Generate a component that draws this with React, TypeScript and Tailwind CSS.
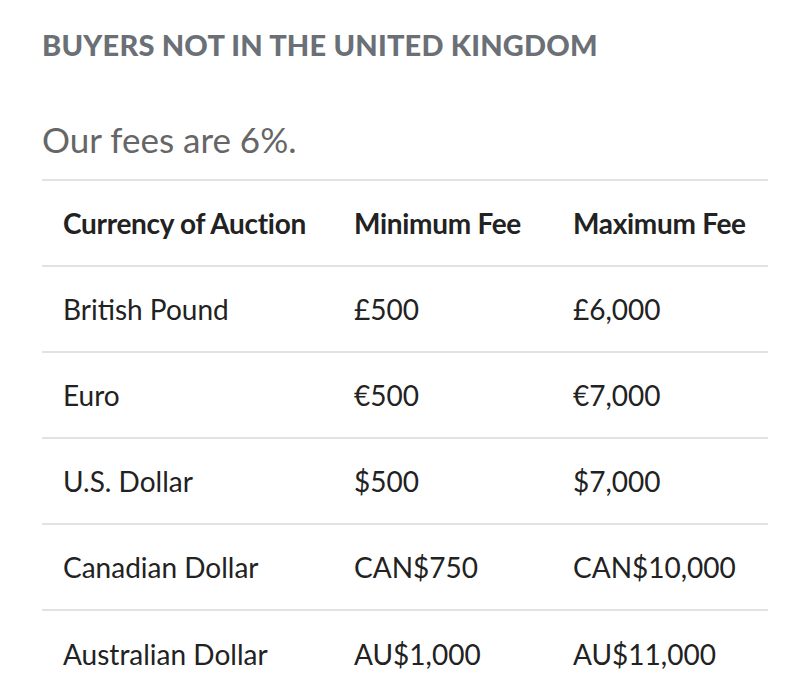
const rows = [
  ["British Pound", "£500", "£6,000"],
  ["Euro", "€500", "€7,000"],
  ["U.S. Dollar", "$500", "$7,000"],
  ["Canadian Dollar", "CAN$750", "CAN$10,000"],
  ["Australian Dollar", "AU$1,000", "AU$11,000"],
];

export default function App() {
  return (
    <div className="min-h-screen bg-white px-[42px] pt-[27px] font-['Lato','Liberation_Sans',sans-serif]">
      <h2 className="font-['Futura','Lato','Liberation_Sans',sans-serif] text-[29px] font-black uppercase leading-[36px] tracking-[0.2px] text-[#6b7076]">
        Buyers not in the United Kingdom
      </h2>
      <p className="mt-[54px] text-[35px] leading-[44px] text-[#666666]">Our fees are 6%.</p>
      <table className="mt-[18px] w-[726px] table-fixed border-collapse whitespace-nowrap text-[28px] text-[#222222]">
        <thead>
          <tr className="border-y-2 border-[#e2e2e2]">
            <th className="h-[86px] w-[291px] px-[21px] text-left font-bold tracking-[-0.3px]">Currency of Auction</th>
            <th className="h-[86px] w-[219px] px-[21px] text-left font-bold tracking-[-0.3px]">Minimum Fee</th>
            <th className="h-[86px] px-[21px] text-left font-bold tracking-[-0.3px]">Maximum Fee</th>
          </tr>
        </thead>
        <tbody>
          {rows.map((r, i) => (
            <tr key={i} className={i < rows.length - 1 ? "border-b-2 border-[#e2e2e2]" : ""}>
              {r.map((c, j) => (
                <td key={j} className="h-[86px] px-[21px] text-left">
                  {c}
                </td>
              ))}
            </tr>
          ))}
        </tbody>
      </table>
    </div>
  );
}
